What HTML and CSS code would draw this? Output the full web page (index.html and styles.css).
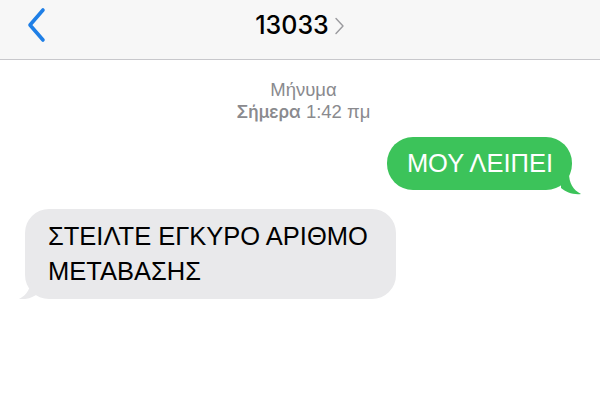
FILE: index.html
```html
<!DOCTYPE html>
<html lang="el">
<head>
    <meta charset="UTF-8">
    <meta name="viewport" content="width=device-width, initial-scale=1.0">
    <title>13033</title>
    <link rel="stylesheet" href="styles.css">
</head>
<body>
    <header class="nav">
        <a class="back" href="#">
            <svg width="20" height="36" viewBox="0 0 20 36">
                <path d="M17 3 L4 18 L17 33" fill="none" stroke="#1f7fe6" stroke-width="3.6" stroke-linecap="round" stroke-linejoin="round"/>
            </svg>
        </a>
        <div class="title">
            <span>13033</span>
            <svg class="chev" width="11" height="18" viewBox="0 0 11 18">
                <path d="M2 1.5 L9 9 L2 16.5" fill="none" stroke="#9a9a9e" stroke-width="1.4" stroke-linecap="round" stroke-linejoin="round"/>
            </svg>
        </div>
    </header>

    <main class="thread">
        <div class="stamp">
            <div>Μήνυμα</div>
            <div><b>Σήμερα</b> 1:42 πμ</div>
        </div>

        <div class="row out">
            <div class="bubble green">
                ΜΟΥ ΛΕΙΠΕΙ
                <svg class="tail" width="22" height="22" viewBox="0 0 22 22">
                    <path d="M0 0 L8 0 C8 10 12 17 20 21 C12 22 5 19 0 15 Z" fill="#3cc35a"/>
                </svg>
            </div>
        </div>

        <div class="row in">
            <div class="bubble gray">
                ΣΤΕΙΛΤΕ ΕΓΚΥΡΟ ΑΡΙΘΜΟ<br>ΜΕΤΑΒΑΣΗΣ
                <svg class="tail" width="22" height="22" viewBox="0 0 22 22">
                    <path d="M22 0 L14 0 C14 10 10 17 2 21 C10 22 17 19 22 15 Z" fill="#e9e9eb"/>
                </svg>
            </div>
        </div>
    </main>
</body>
</html>
```

FILE: styles.css
```css
body {
    margin: 0;
    background-color: #fff;
    font-family: "Liberation Sans", Arial, sans-serif;
    color: #000;
}
.nav {
    height: 60px;
    background-color: #f7f7f7;
    border-bottom: 1px solid #c8c8cc;
    box-sizing: border-box;
    display: flex;
    align-items: center;
    position: relative;
}
.back {
    display: flex;
    margin-left: 26px;
    margin-top: -10px;
}
.title {
    position: absolute;
    left: 0;
    right: 0;
    top: 10px;
    display: flex;
    justify-content: center;
    align-items: center;
    gap: 5px;
    font-family: Inter, "Liberation Sans", sans-serif;
    font-size: 25px;
    font-weight: 500;
    pointer-events: none;
}
.chev {
    margin-top: 1px;
}
.thread {
    padding: 19px 18px 0 25px;
}
.stamp {
    text-align: center;
    color: #8a8a8e;
    font-size: 18.5px;
    line-height: 22px;
}
.stamp b {
    font-family: Inter, "Liberation Sans", sans-serif;
    font-size: 17px;
    font-weight: 600;
}
.row {
    display: flex;
}
.row.out {
    justify-content: flex-end;
    margin-top: 14px;
    padding-right: 10px;
}
.row.in {
    margin-top: 19px;
}
.bubble {
    position: relative;
    font-size: 25.5px;
    line-height: 35px;
}
.green {
    background-color: #3cc35a;
    color: #fff;
    border-radius: 26px;
    padding: 9px 19px 9px 20px;
}
.gray {
    background-color: #e9e9eb;
    border-radius: 24px;
    padding: 10px 28px 10px 23px;
}
.green .tail {
    position: absolute;
    right: -11px;
    bottom: -5px;
}
.gray .tail {
    position: absolute;
    left: -8px;
    bottom: -1px;
}
```
